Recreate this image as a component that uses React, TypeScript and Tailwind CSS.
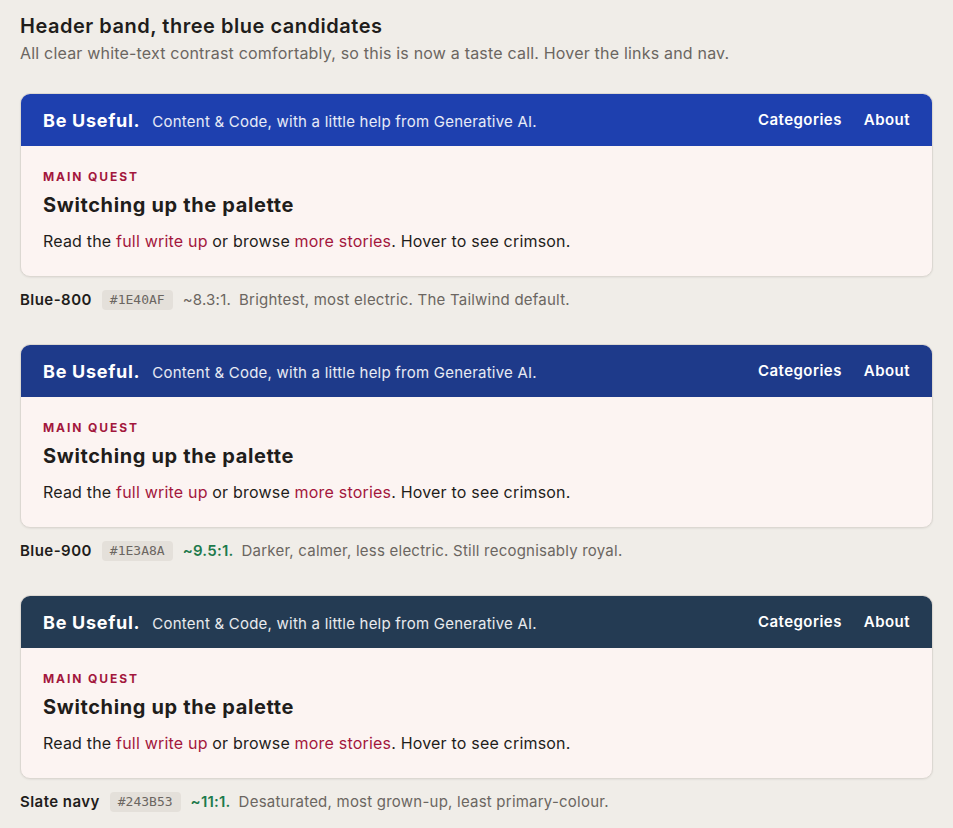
import React from 'react';

interface Candidate {
  name: string;
  hex: string;
  ratio: string;
  good: boolean;
  note: string;
  band: string;
}

const candidates: Candidate[] = [
  { name: 'Blue-800', hex: '#1E40AF', ratio: '~8.3:1.', good: false, note: 'Brightest, most electric. The Tailwind default.', band: 'bg-[#1e40af]' },
  { name: 'Blue-900', hex: '#1E3A8A', ratio: '~9.5:1.', good: true, note: 'Darker, calmer, less electric. Still recognisably royal.', band: 'bg-[#1e3a8a]' },
  { name: 'Slate navy', hex: '#243B53', ratio: '~11:1.', good: true, note: 'Desaturated, most grown-up, least primary-colour.', band: 'bg-[#243b53]' },
];

const HeaderCard: React.FC<{ band: string }> = ({ band }) => (
  <div className="rounded-[10px] border border-[#dcd8d2] overflow-hidden bg-[#fcf4f2] shadow-[0_1px_2px_rgba(0,0,0,0.06)]">
    <div className={`${band} h-[52px] flex items-center justify-between px-[22px] text-white`}>
      <div className="flex items-baseline gap-3">
        <span className="text-[18px] font-bold tracking-[0.04em]">Be Useful.</span>
        <span className="text-[15px] tracking-[0.015em] text-white/90">Content &amp; Code, with a little help from Generative AI.</span>
      </div>
      <nav className="flex items-center gap-[22px] text-[15px] font-semibold tracking-[0.03em]">
        <a href="#" className="hover:underline">Categories</a>
        <a href="#" className="hover:underline">About</a>
      </nav>
    </div>
    <div className="px-[22px] pt-[23px] pb-[23px]">
      <div className="text-[12px] leading-4 font-bold tracking-[0.16em] text-[#a3173d]">MAIN QUEST</div>
      <h2 className="mt-[6px] text-[20px] leading-7 font-bold tracking-[0.032em] text-[#1f1d1b]">Switching up the palette</h2>
      <p className="mt-[10px] text-[16px] leading-6 tracking-[0.012em] text-[#1f1d1b]">
        Read the <a href="#" className="text-[#a3173d] hover:text-[#dc143c]">full write up</a> or browse{' '}
        <a href="#" className="text-[#a3173d] hover:text-[#dc143c]">more stories</a>. Hover to see crimson.
      </p>
    </div>
  </div>
);

export default function App() {
  return (
    <div className="min-h-screen bg-[#f0ede8] px-5 pt-3 pb-6 font-['Inter',sans-serif] text-[#1f1d1b]">
      <h1 className="text-[20px] leading-7 font-semibold tracking-[0.026em]">Header band, three blue candidates</h1>
      <p className="mt-[2px] text-[16px] leading-[22px] tracking-[0.012em] text-[#6b6661]">
        All clear white-text contrast comfortably, so this is now a taste call. Hover the links and nav.
      </p>
      <div className="mt-[29px] flex flex-col gap-[34px]">
        {candidates.map(c => (
          <section key={c.name}>
            <HeaderCard band={c.band} />
            <div className="mt-[13px] flex items-center h-5 text-[15px] tracking-[0.015em]">
              <span className="font-semibold tracking-[0.03em] text-[#1f1d1b]">{c.name}</span>
              <code className="ml-[10px] px-2 h-5 flex items-center rounded bg-[#e4e0da] font-['DejaVu_Sans_Mono',monospace] text-[13px] tracking-normal text-[#6b6661]">{c.hex}</code>
              <span className={`ml-[10px] ${c.good ? 'font-semibold text-[#1e7a4c]' : 'text-[#6b6661]'}`}>{c.ratio}</span>
              <span className="ml-[8px] text-[#6b6661]">{c.note}</span>
            </div>
          </section>
        ))}
      </div>
    </div>
  );
}
